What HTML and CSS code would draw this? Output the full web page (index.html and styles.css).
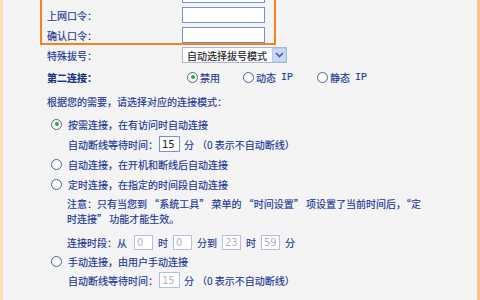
FILE: index.html
```html
<!DOCTYPE html>
<html lang="zh-CN">
<head>
  <meta charset="UTF-8" />
  <title>WAN口设置</title>
  <link rel="stylesheet" href="styles.css">
</head>
<body>
  <div class="page">
    <div class="auth-box">
      <div class="row box-row">
        <span class="label"></span>
        <input class="text" type="text" />
      </div>
      <div class="row box-row">
        <span class="label">上网口令：</span>
        <input class="text" type="password" />
      </div>
      <div class="row box-row">
        <span class="label">确认口令：</span>
        <input class="text" type="password" />
      </div>
    </div>

    <div class="row plain dial-row">
      <span class="label">特殊拔号：</span>
      <div class="select">
        <span class="select-text">自动选择拔号模式</span>
        <span class="select-btn">
          <svg width="9" height="6" viewBox="0 0 9 6"><path d="M1 1 L4.5 4.5 L8 1" fill="none" stroke="#4a5f8c" stroke-width="1.6"/></svg>
        </span>
      </div>
    </div>

    <div class="row plain second-row">
      <span class="label strong">第二连接：</span>
      <div class="options">
        <span class="opt opt-first"><span class="radio checked"></span>禁用</span>
        <span class="opt opt-second"><span class="radio"></span>动态 <span class="mono">IP</span></span>
        <span class="opt"><span class="radio"></span>静态 <span class="mono">IP</span></span>
      </div>
    </div>

    <div class="intro">根据您的需要，请选择对应的连接模式：</div>

    <div class="choice first-choice"><span class="radio checked"></span>按需连接，在有访问时自动连接</div>
    <div class="sub wait-row">
      自动断线等待时间：<input class="num" type="text" value="15" />
      <span class="unit">分</span>
      <span>（0 表示不自动断线）</span>
    </div>

    <div class="choice"><span class="radio"></span>自动连接，在开机和断线后自动连接</div>
    <div class="choice"><span class="radio"></span>定时连接，在指定的时间段自动连接</div>

    <div class="sub note">注意：只有当您到 “系统工具” 菜单的 “时间设置” 项设置了当前时间后，“定<br>时连接” 功能才能生效。</div>

    <div class="sub time-row">
      <span>连接时段：从</span>
      <input class="time first-time" type="text" value="0" disabled />
      <span>时</span>
      <input class="time" type="text" value="0" disabled />
      <span>分到</span>
      <input class="time" type="text" value="23" disabled />
      <span>时</span>
      <input class="time" type="text" value="59" disabled />
      <span>分</span>
    </div>

    <div class="choice manual"><span class="radio"></span>手动连接，由用户手动连接</div>
    <div class="sub wait-row last-wait">
      自动断线等待时间：<input class="num" type="text" value="15" disabled />
      <span class="unit">分</span>
      <span>（0 表示不自动断线）</span>
    </div>
  </div>
</body>
</html>
```

FILE: styles.css
```css
body {
  margin: 0;
  background: #f4f4f4;
  font-family: "Noto Sans CJK SC", "DejaVu Sans", sans-serif;
  font-size: 10px;
  color: #1a3796;
  -webkit-text-stroke: 0.15px #1a3796;
  overflow: hidden;
}
.page {
  display: flow-root;
  width: 480px;
  height: 300px;
  box-sizing: border-box;
  border-left: 3px solid #fddcbb;
  border-right: 3px solid #fcc48c;
  padding-left: 37px;
}
.auth-box {
  width: 236px;
  box-sizing: border-box;
  margin-top: -19px;
  border: 2px solid #f5821f;
  padding-left: 5px;
}
.row {
  display: flex;
  align-items: center;
}
.box-row {
  padding-top: 4px;
  height: 16px;
}
.plain {
  padding-left: 7px;
}
.label {
  width: 135px;
  flex: none;
}
.strong {
  font-weight: bold;
  color: #142f80;
}
input {
  box-sizing: border-box;
  margin: 0;
  background: #fff;
  border: 1px solid #7b8fcf;
  font-family: "DejaVu Sans", sans-serif;
  font-size: 10px;
  color: #222;
  -webkit-text-stroke: 0;
  outline: none;
}
input:disabled {
  border-color: #b3c0e3;
  color: #b4b4b4;
}
.text {
  width: 83px;
  height: 16px;
}
.dial-row {
  padding-top: 2px;
  height: 16px;
}
.select {
  width: 105px;
  height: 16px;
  box-sizing: border-box;
  border: 1px solid #a9b6d6;
  background: #fff;
  display: flex;
  align-items: center;
  justify-content: space-between;
  color: #222;
  -webkit-text-stroke: 0.15px #222;
}
.select-text {
  padding-left: 4px;
}
.select-btn {
  width: 14px;
  height: 14px;
  box-sizing: border-box;
  border: 1px solid #bccbf0;
  background: #c8d7fa;
  display: flex;
  align-items: center;
  justify-content: center;
}
.second-row {
  margin-top: 4px;
  height: 20px;
}
.options {
  display: flex;
  align-items: center;
  padding-left: 5px;
}
.opt {
  display: flex;
  align-items: center;
  gap: 2px;
}
.opt-first {
  width: 56px;
}
.opt-second {
  width: 74px;
}
.mono {
  font-family: "Liberation Mono", monospace;
  font-size: 10px;
  margin-left: 3px;
}
.radio {
  display: inline-block;
  width: 11px;
  height: 11px;
  box-sizing: border-box;
  border: 1px solid #52688f;
  border-radius: 50%;
  background: radial-gradient(circle, #ffffff 50%, #e3e6ec 100%);
  position: relative;
  flex: none;
}
.radio.checked::after {
  content: "";
  position: absolute;
  left: 2.5px;
  top: 2.5px;
  width: 4px;
  height: 4px;
  border-radius: 50%;
  background: #2fa63a;
}
.intro {
  margin-top: 5px;
  padding-left: 7px;
  height: 20px;
  line-height: 20px;
}
.choice {
  display: flex;
  align-items: center;
  gap: 6px;
  padding-left: 11px;
  height: 20px;
}
.first-choice {
  margin-top: 2px;
}
.sub {
  padding-left: 28px;
}
.wait-row {
  display: flex;
  align-items: center;
  height: 20px;
}
.num {
  width: 21px;
  height: 16px;
  margin-left: 1px;
  padding: 0 2px;
}
.unit {
  margin: 0 3px 0 4px;
}
.note {
  margin-top: 2px;
  line-height: 15px;
  padding-left: 27px;
}
.time-row {
  display: flex;
  align-items: center;
  gap: 5px;
  height: 20px;
  margin-top: 6px;
  padding-left: 27px;
}
.time {
  width: 19px;
  height: 15px;
  padding: 0 2px;
}
.first-time {
  margin-left: 2px;
}
.manual {
  height: 18px;
}
```
